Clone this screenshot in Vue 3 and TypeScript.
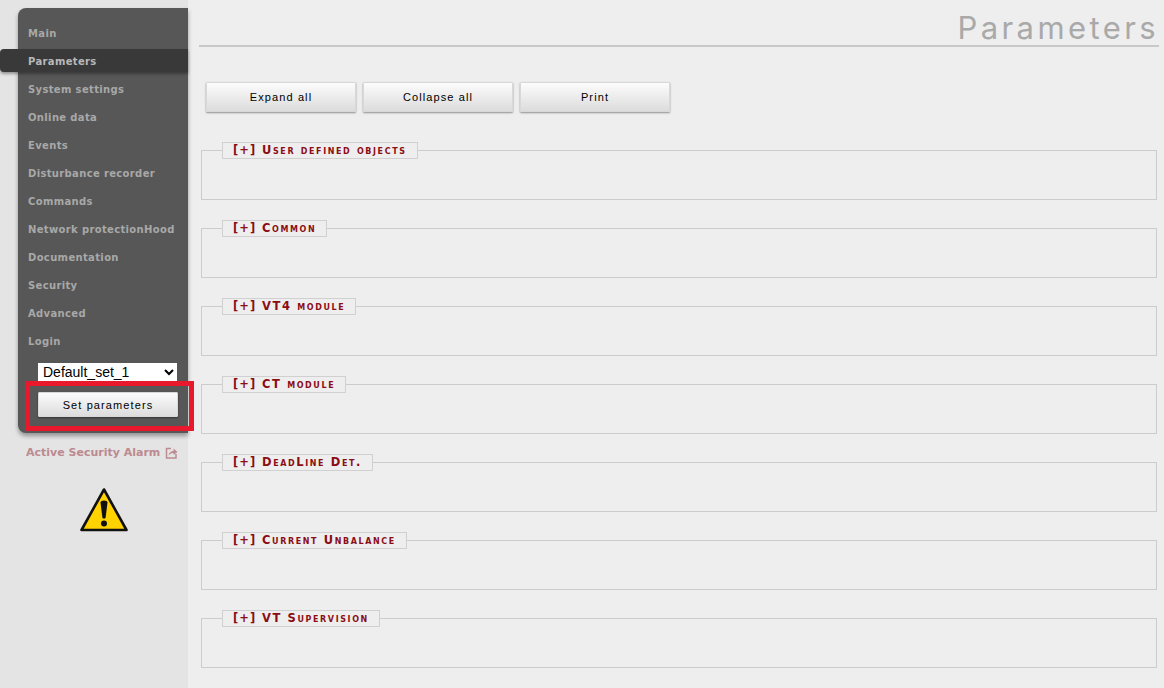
<script setup lang="ts">
const navItems = [
  "Main",
  "Parameters",
  "System settings",
  "Online data",
  "Events",
  "Disturbance recorder",
  "Commands",
  "Network protectionHood",
  "Documentation",
  "Security",
  "Advanced",
  "Login",
];

const actions = ["Expand all", "Collapse all", "Print"];

const groups = [
  "User defined objects",
  "Common",
  "VT4 module",
  "CT module",
  "DeadLine Det.",
  "Current Unbalance",
  "VT Supervision",
];
</script>

<template>
  <div class="page">
    <aside class="sidebar">
      <nav class="menu">
        <a
          v-for="item in navItems"
          :key="item"
          class="menu-item"
          :class="{ 'menu-item--active': item === 'Parameters' }"
        >
          {{ item }}
        </a>
        <div class="set-box">
          <select class="set-select">
            <option>Default_set_1</option>
          </select>
          <button class="btn set-btn">Set parameters</button>
        </div>
        <div class="annotation"></div>
      </nav>

      <a class="alarm">
        Active Security Alarm
        <svg class="alarm-icon" width="13" height="13" viewBox="0 0 13 13">
          <path d="M6 2.500H1.500V12H11V8" fill="none" stroke="currentColor" stroke-width="1.500" />
          <path d="M3.500 9.500C4 6.500 6 5 8.500 5V2.500L12.500 6L8.500 9V7C6.500 7 5 7.800 3.500 9.500Z" fill="currentColor" />
        </svg>
      </a>

      <svg class="warning" width="50" height="46" viewBox="0 0 50 46">
        <path d="M25 2.500L47.500 43H2.500Z" fill="#ffd200" stroke="#111" stroke-width="2.600" stroke-linejoin="round" />
        <path d="M21.500 15.500C21.500 12.800 28.500 12.800 28.500 15.500L26.600 30.500C26.400 32 23.600 32 23.400 30.500Z" fill="#111" />
        <circle cx="25" cy="36.500" r="3" fill="#111" />
      </svg>
    </aside>

    <main class="content">
      <h1 class="title">Parameters</h1>

      <div class="actions">
        <button v-for="action in actions" :key="action" class="btn action-btn">{{ action }}</button>
      </div>

      <fieldset v-for="group in groups" :key="group" class="group">
        <legend class="group-legend"><span class="group-toggle">[+]</span> {{ group }}</legend>
      </fieldset>
    </main>
  </div>
</template>

<style>
html,
body {
  margin: 0;
  background: #eeeeee;
}
</style>

<style scoped>
.page {
  display: flex;
  width: 1164px;
  height: 688px;
  overflow: hidden;
  background: #eeeeee;
  font-family: "DejaVu Sans", Verdana, sans-serif;
}

.sidebar {
  box-sizing: border-box;
  width: 188px;
  flex-shrink: 0;
  padding-top: 8px;
  background: #e4e4e4;
}

.menu {
  position: relative;
  box-sizing: border-box;
  height: 425px;
  margin-left: 18px;
  padding-top: 12px;
  background: #575757;
  border-radius: 8px 0 0 8px;
  box-shadow: 0 3px 4px rgba(0, 0, 0, 0.35);
}

.menu-item {
  position: relative;
  display: block;
  height: 28px;
  padding-left: 10px;
  font-size: 10px;
  font-weight: 700;
  line-height: 28px;
  letter-spacing: 0.35px;
  color: #a8a8a8;
  white-space: nowrap;
}

.menu-item--active {
  height: 23px;
  margin: 1px 0 4px -18px;
  padding-left: 28px;
  line-height: 26px;
  color: #b8b8b8;
  background: #393939;
  border-radius: 4px 0 0 4px;
  box-shadow: 0 2px 3px rgba(0, 0, 0, 0.35);
}

.set-box {
  display: flex;
  flex-direction: column;
  gap: 11px;
  margin: 7px 0 0 20px;
}

.set-select {
  box-sizing: border-box;
  width: 139px;
  height: 18px;
  padding: 0 0 0 1px;
  font-family: "Liberation Sans", Arial, sans-serif;
  font-size: 14px;
  color: #000;
  background: #fff;
  border: none;
  border-radius: 0;
}

.btn {
  font-family: "Liberation Sans", Arial, sans-serif;
  font-size: 11px;
  font-weight: 400;
  letter-spacing: 1.1px;
  color: #000;
  background: linear-gradient(to bottom, #fcfcfc, #dcdcdc);
  border: 1px solid #d8d8d8;
  border-radius: 1px;
  box-shadow: 0 1px 2px rgba(0, 0, 0, 0.4);
  padding: 0;
}

.set-btn {
  width: 140px;
  height: 25px;
}

.annotation {
  position: absolute;
  left: 7px;
  top: 373px;
  box-sizing: border-box;
  width: 169px;
  height: 50px;
  border: 5px solid #e8192c;
}

.alarm {
  display: flex;
  align-items: center;
  gap: 5px;
  margin: 13px 0 0 26px;
  font-size: 11px;
  font-weight: 700;
  color: #bc8a90;
  white-space: nowrap;
}

.alarm-icon {
  flex-shrink: 0;
}

.warning {
  display: block;
  margin: 28px 0 0 79px;
}

.content {
  flex: 1;
  min-width: 0;
  padding: 0 5px 0 11px;
}

.title {
  height: 47px;
  box-sizing: border-box;
  margin: 0;
  font-family: Inter, Lato, sans-serif;
  font-size: 31px;
  font-weight: 400;
  line-height: 55px;
  letter-spacing: 3.400px;
  text-align: right;
  color: #a9a9a9;
  border-bottom: 2px solid #c8c8c8;
  white-space: nowrap;
}

.actions {
  display: flex;
  gap: 7px;
  margin: 35px 0 0 7px;
}

.action-btn {
  width: 150px;
  height: 30px;
}

.group {
  box-sizing: border-box;
  height: 58px;
  margin: 20px 2px 0 2px;
  padding: 0 0 0 20px;
  border: 1px solid #cccccc;
}

.actions + .group {
  margin-top: 30px;
}

.group-legend {
  box-sizing: border-box;
  height: 17px;
  padding: 0 10px;
  font-size: 11.500px;
  font-weight: 700;
  font-variant: small-caps;
  line-height: 15px;
  letter-spacing: 1.600px;
  color: #8b0d14;
  border: 1px solid #d0d0d0;
  white-space: nowrap;
}

.group-toggle {
  letter-spacing: 1.100px;
}
</style>
